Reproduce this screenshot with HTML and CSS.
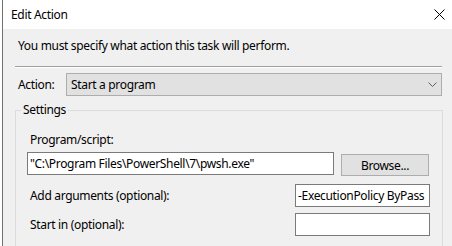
FILE: index.html
```
<!DOCTYPE html>
<html lang="en">
<head>
    <meta charset="UTF-8">
    <title>Edit Action</title>
    <link rel="stylesheet" href="styles.css">
</head>
<body>

<div class="dialog">
    <div class="titlebar">
        <span class="title">Edit Action</span>
        <svg class="close" width="11" height="11" viewBox="0 0 11 11">
            <path d="M0.5 0.5 L10.5 10.5 M10.5 0.5 L0.5 10.5" stroke="#000" stroke-width="1" fill="none"/>
        </svg>
    </div>

    <div class="content">
        <div class="intro">You must specify what action this task will perform.</div>
        <div class="separator"></div>

        <div class="action-row">
            <label class="action-label" for="action">Action:</label>
            <div class="combo" id="action">
                <span>Start a program</span>
                <svg width="9" height="5" viewBox="0 0 9 5">
                    <path d="M0.5 0.5 L4.5 4.5 L8.5 0.5" stroke="#606060" stroke-width="1" fill="none"/>
                </svg>
            </div>
        </div>

        <fieldset class="settings">
            <legend>Settings</legend>

            <label class="field-label" for="program">Program/script:</label>
            <div class="program-row">
                <input type="text" id="program" class="textbox program" value="&quot;C:\Program Files\PowerShell\7\pwsh.exe&quot;">
                <button type="button" class="browse">Browse...</button>
            </div>

            <div class="arg-row">
                <label class="field-label" for="args">Add arguments (optional):</label>
                <input type="text" id="args" class="textbox short" value="-ExecutionPolicy ByPass">
            </div>

            <div class="arg-row start-row">
                <label class="field-label" for="startin">Start in (optional):</label>
                <input type="text" id="startin" class="textbox short" value="">
            </div>
        </fieldset>
    </div>
</div>

</body>
</html>
```

FILE: styles.css
```
body {
    margin: 0;
    padding-left: 2px;
    background-color: #fff;
    font-family: 'Noto Sans', sans-serif;
    font-size: 12px;
    letter-spacing: -0.33px;
    color: #000;
    height: 246px;
    overflow: hidden;
}

.dialog {
    border-left: 1px solid #707070;
    height: 100%;
}

.titlebar {
    height: 29px;
    background-color: #fff;
    display: flex;
    align-items: center;
    justify-content: space-between;
    padding-left: 8px;
    padding-right: 7px;
}

.title {
    font-size: 12px;
    line-height: 16px;
}

.close {
    display: block;
    margin-top: -1px;
}

.content {
    background-color: #f0f0f0;
    height: 217px;
    padding-top: 9px;
    box-sizing: border-box;
}

.intro {
    padding-left: 15px;
    line-height: 16px;
}

.separator {
    margin: 12px 0 0 12px;
    width: 427px;
    border-top: 1px solid #a0a0a0;
    border-bottom: 1px solid #fff;
}

.action-row {
    display: flex;
    align-items: center;
    margin-top: 5px;
    padding-left: 15px;
}

.action-label {
    width: 48px;
}

.combo {
    width: 366px;
    height: 21px;
    border: 1px solid #adadad;
    background-color: #e1e1e1;
    display: flex;
    align-items: center;
    justify-content: space-between;
    padding: 0 4px 0 4px;
    box-sizing: content-box;
}

.combo span {
    line-height: 16px;
}

.combo svg {
    display: block;
}

.settings {
    margin: 6px 0 0 12px;
    width: 428px;
    box-sizing: border-box;
    border: 1px solid #dcdcdc;
    padding: 14px 12px 20px 11px;
    min-width: 0;
}

.settings legend {
    padding: 0 2px;
    margin-left: -6px;
    line-height: 16px;
}

.field-label {
    display: block;
    padding-left: 3px;
    line-height: 16px;
}

.textbox {
    font-family: 'Noto Sans', sans-serif;
    font-size: 12px;
    letter-spacing: -0.33px;
    color: #000;
    height: 23px;
    border: 1px solid #7a7a7a;
    background-color: #fff;
    padding: 0 2px;
    margin: 0;
    box-sizing: border-box;
    outline: none;
}

.program-row {
    display: flex;
    align-items: flex-start;
    margin-top: 4px;
}

.program {
    width: 307px;
}

.browse {
    width: 88px;
    height: 22px;
    margin: 2px 0 0 7px;
    border: 1px solid #adadad;
    background-color: #e1e1e1;
    font-family: 'Noto Sans', sans-serif;
    font-size: 12px;
    letter-spacing: -0.33px;
    color: #000;
    padding: 0;
}

.arg-row {
    display: flex;
    align-items: center;
    justify-content: space-between;
    margin-top: 8px;
}

.start-row {
    margin-top: 6px;
}

.short {
    width: 135px;
}
```
